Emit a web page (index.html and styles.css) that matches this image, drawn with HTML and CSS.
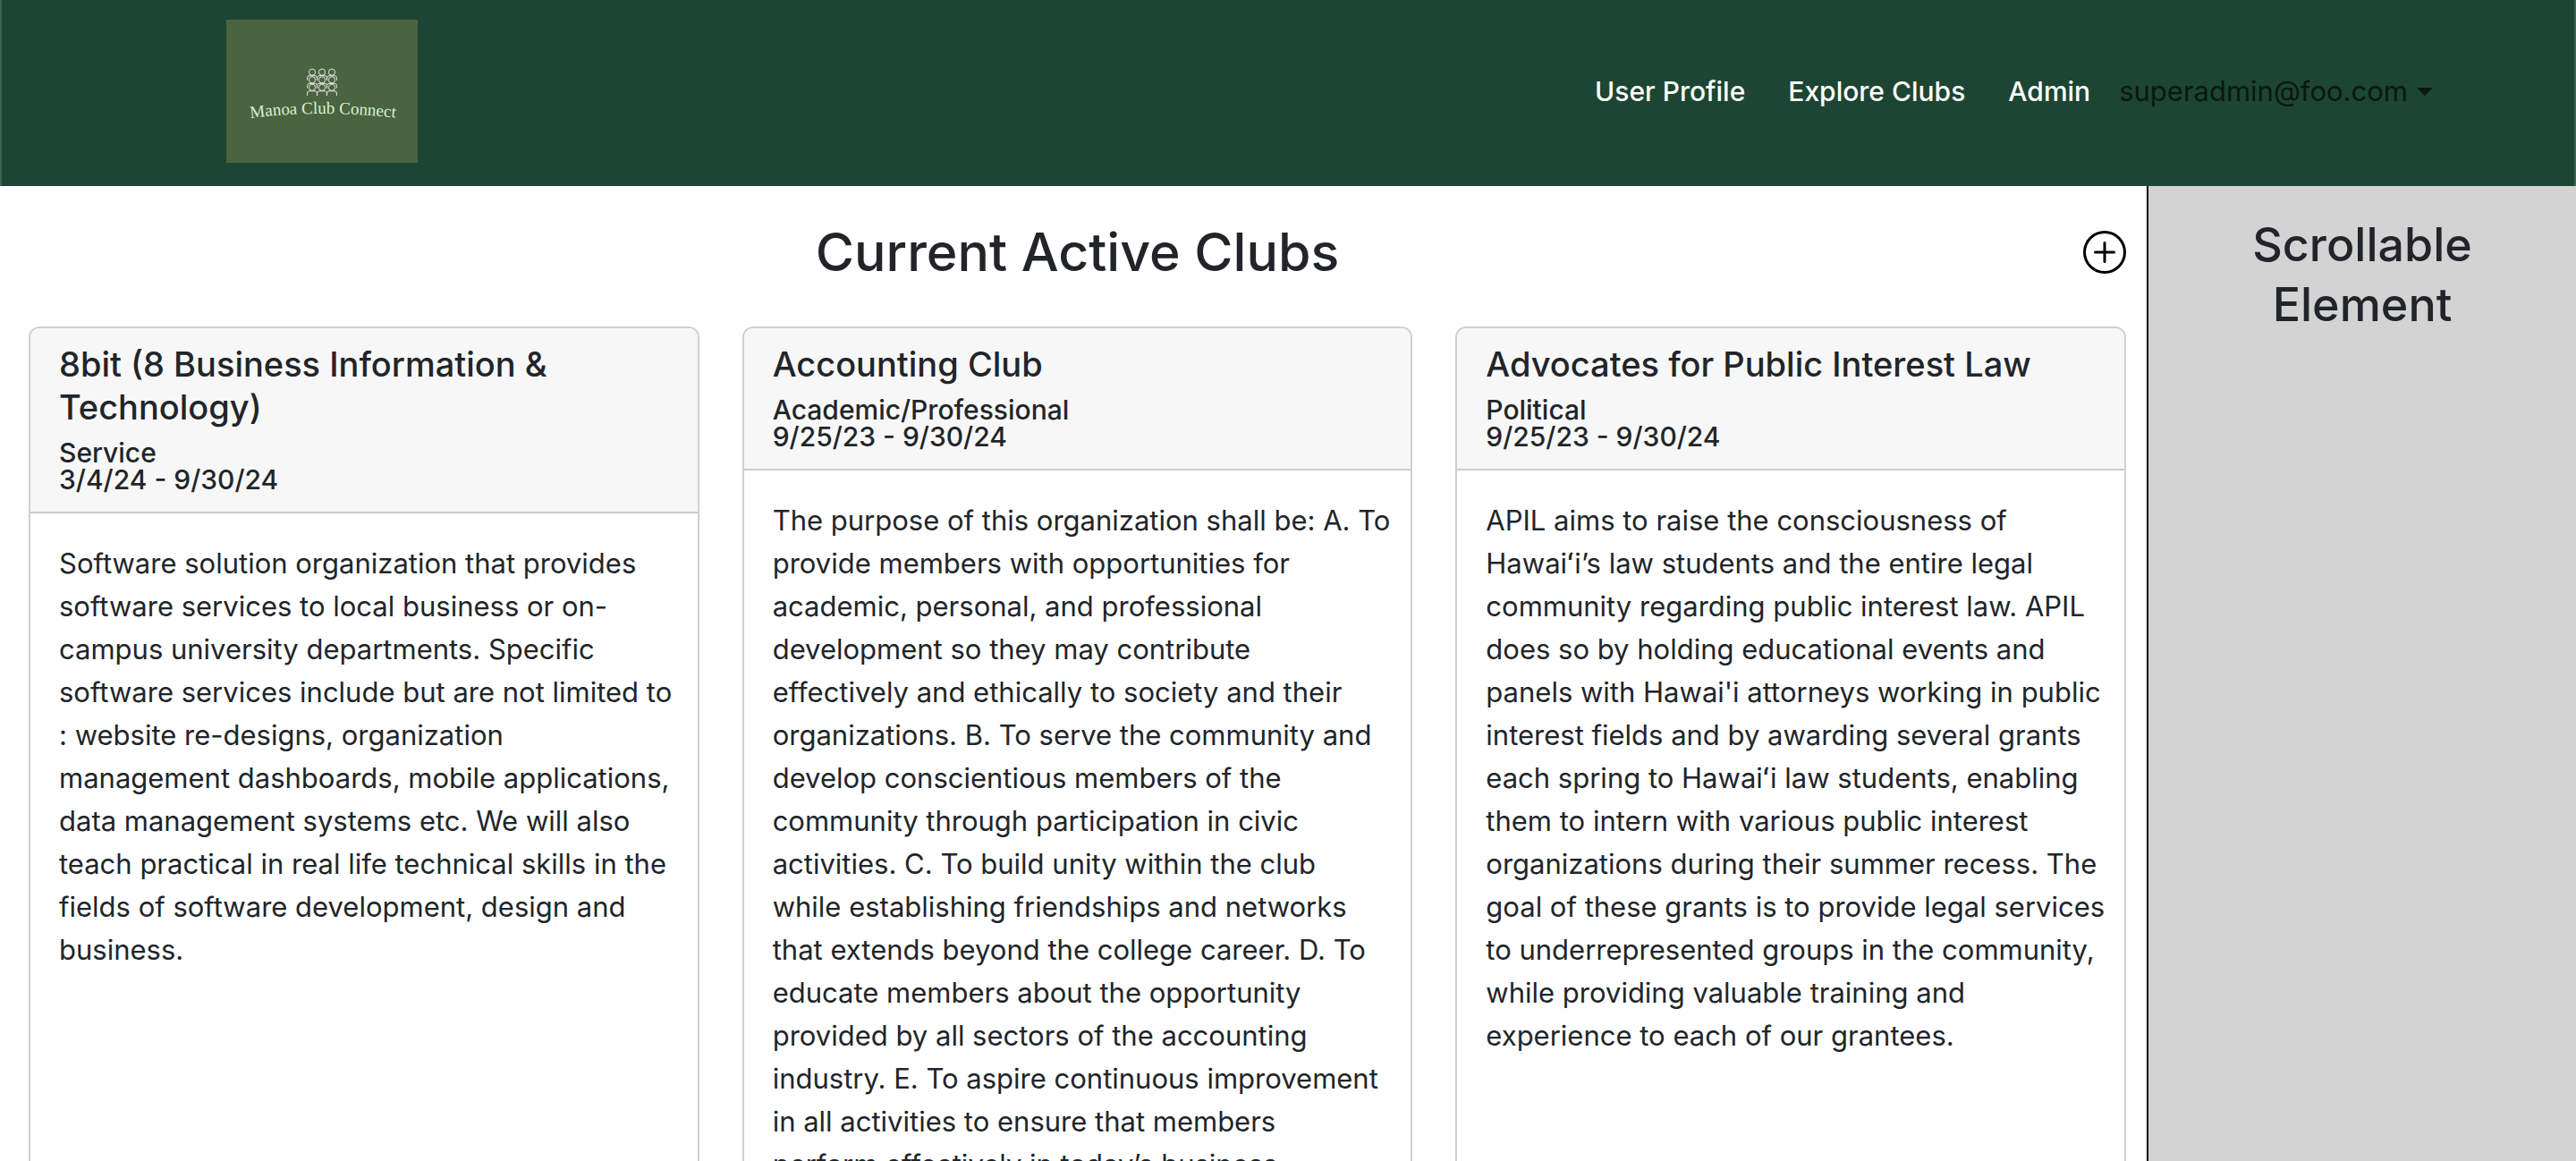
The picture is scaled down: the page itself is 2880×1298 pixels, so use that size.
FILE: index.html
```html
<!DOCTYPE html>
<html lang="en">
<head>
<meta charset="utf-8">
<title>Manoa Club Connect</title>
<link rel="stylesheet" href="styles.css">
</head>
<body>
<header class="navbar">
  <a class="brand" href="#" aria-label="Manoa Club Connect">
    <svg class="logo" viewBox="0 0 214 160">
      <defs>
        <path id="arc" d="M27 110 Q107 100 192 110"/>
        <g id="person">
          <circle cx="0" cy="0" r="3.6"/>
          <path d="M-5.4 9.200V6.200Q-5.400 4 -3 4H3Q5.400 4 5.400 6.200V9.200"/>
        </g>
      </defs>
      <g class="people">
        <use href="#person" x="96" y="58.700"/><use href="#person" x="107" y="58.700"/><use href="#person" x="118" y="58.700"/>
        <use href="#person" x="96" y="67.300"/><use href="#person" x="107" y="67.300"/><use href="#person" x="118" y="67.300"/>
        <use href="#person" x="96" y="75.800"/><use href="#person" x="107" y="75.800"/><use href="#person" x="118" y="75.800"/>
      </g>
      <text class="logo-text"><textPath href="#arc">Manoa Club Connect</textPath></text>
    </svg>
  </a>
  <nav class="nav">
    <a class="nav-link" href="#">User Profile</a>
    <a class="nav-link" href="#">Explore Clubs</a>
    <a class="nav-link" href="#">Admin</a>
    <button class="account" type="button">superadmin@foo.com<span class="caret"></span></button>
  </nav>
</header>
<div class="layout">
  <main class="content">
    <div class="heading-row">
      <h1 class="page-title">Current Active Clubs</h1>
      <button class="add" type="button" aria-label="Add club">
        <svg viewBox="0 0 16 16" fill="currentColor"><path d="M8 15A7 7 0 1 1 8 1a7 7 0 0 1 0 14m0 1A8 8 0 1 0 8 0a8 8 0 0 0 0 16"/><path d="M8 4a.5.5 0 0 1 .5.5v3h3a.5.5 0 0 1 0 1h-3v3a.5.5 0 0 1-1 0v-3h-3a.5.5 0 0 1 0-1h3v-3A.5.5 0 0 1 8 4"/></svg>
      </button>
    </div>
    <div class="cards">
      <article class="card">
        <header class="card-header">
          <h2 class="card-title">8bit (8 Business Information &amp; Technology)</h2>
          <p class="card-meta">Service<br>3/4/24 - 9/30/24</p>
        </header>
        <p class="card-body">Software solution organization that provides software services to local business or on-campus university departments. Specific software services include but are not limited to : website re-designs, organization management dashboards, mobile applications, data management systems etc. We will also teach practical in real life technical skills in the fields of software development, design and business.</p>
      </article>
      <article class="card">
        <header class="card-header">
          <h2 class="card-title">Accounting Club</h2>
          <p class="card-meta">Academic/Professional<br>9/25/23 - 9/30/24</p>
        </header>
        <p class="card-body">The purpose of this organization shall be: A. To provide members with opportunities for academic, personal, and professional development so they may contribute effectively and ethically to society and their organizations. B. To serve the community and develop conscientious members of the community through participation in civic activities. C. To build unity within the club<br>while establishing friendships and networks that extends beyond the college career. D. To educate members about the opportunity provided by all sectors of the accounting industry. E. To aspire continuous improvement in all activities to ensure that members<br>perform effectively in today’s business</p>
      </article>
      <article class="card">
        <header class="card-header">
          <h2 class="card-title">Advocates for Public Interest Law</h2>
          <p class="card-meta">Political<br>9/25/23 - 9/30/24</p>
        </header>
        <p class="card-body">APIL aims to raise the consciousness of Hawaiʻi’s law students and the entire legal community regarding public interest law. APIL does so by holding educational events and panels with Hawai'i attorneys working in public interest fields and by awarding several grants each spring to Hawaiʻi law students, enabling them to intern with various public interest organizations during their summer recess. The goal of these grants is to provide legal services to underrepresented groups in the community, while providing valuable training and experience to each of our grantees.</p>
      </article>
    </div>
  </main>
  <aside class="sidebar">
    <h2 class="sidebar-title">Scrollable Element</h2>
  </aside>
</div>
</body>
</html>
```
FILE: styles.css
```css
* { box-sizing: border-box; }

body {
  margin: 0;
  height: 100vh;
  display: flex;
  flex-direction: column;
  overflow: hidden;
  background: #fff;
  color: #212529;
  font: 400 31px/48px Inter, "Liberation Sans", sans-serif;
}

h1, h2, p { margin: 0; }

button {
  padding: 0;
  border: 0;
  background: none;
  color: inherit;
  font: inherit;
}

.navbar {
  display: flex;
  flex: none;
  justify-content: space-between;
  align-items: center;
  padding: 22px 160px 26px 253px;
  background: #1d4533;
  box-shadow: inset 2px 0 #3f6352, inset -2px 0 #3f6352;
}

.brand, .logo { display: block; }

.logo {
  width: 214px;
  height: 160px;
  background: #4a6340;
}

.people {
  fill: none;
  stroke: #e4e8e0;
  stroke-width: 1;
}

.logo-text {
  fill: #d5f2d0;
  font: 19px "Liberation Serif", serif;
}

.nav {
  display: flex;
  align-items: center;
  font-size: 30px;
}

.nav-link {
  margin-right: 48px;
  color: #fff;
  font-weight: 500;
  text-decoration: none;
}

.nav-link:nth-child(3) { margin-right: 32px; }

.account {
  display: flex;
  align-items: center;
  gap: 10px;
  color: #0a1812;
  font-size: 31px;
}

.caret {
  border: 9px solid transparent;
  border-top-color: currentColor;
  border-bottom: 0;
}

.layout {
  display: grid;
  grid-template-columns: 5fr 1fr;
  flex: 1;
  min-height: 0;
}

.content {
  padding: 34px 23px 32px 32px;
  overflow: auto;
  scrollbar-width: none;
}

.heading-row {
  display: grid;
  grid-template-columns: 48px 1fr 48px;
  align-items: center;
  padding-bottom: 43px;
}

.page-title {
  grid-column: 2;
  text-align: center;
  font-size: 59px;
  font-weight: 500;
  line-height: 80px;
}

.add {
  width: 48px;
  height: 48px;
  color: #000;
}

.add svg { display: block; }

.cards {
  display: grid;
  grid-template-columns: repeat(3, 1fr);
  gap: 48px;
}

.card {
  border: 2px solid #d0d0d0;
  border-radius: 12px;
  overflow: hidden;
}

.card-header {
  padding: 16px 32px 21px;
  border-bottom: 2px solid #cbcbcb;
  background: #f7f7f7;
}

.card-title {
  font-size: 38px;
  font-weight: 500;
  line-height: 48px;
}

.card-meta {
  margin-top: 12px;
  font-size: 30px;
  font-weight: 500;
  line-height: 30px;
}

.card-body { padding: 32px 20px 32px 32px; }

.sidebar {
  padding: 32px;
  border-left: 2px solid #000;
  background: #d3d3d3;
}

.sidebar-title {
  text-align: center;
  font-size: 52px;
  font-weight: 500;
  line-height: 67px;
}
```
